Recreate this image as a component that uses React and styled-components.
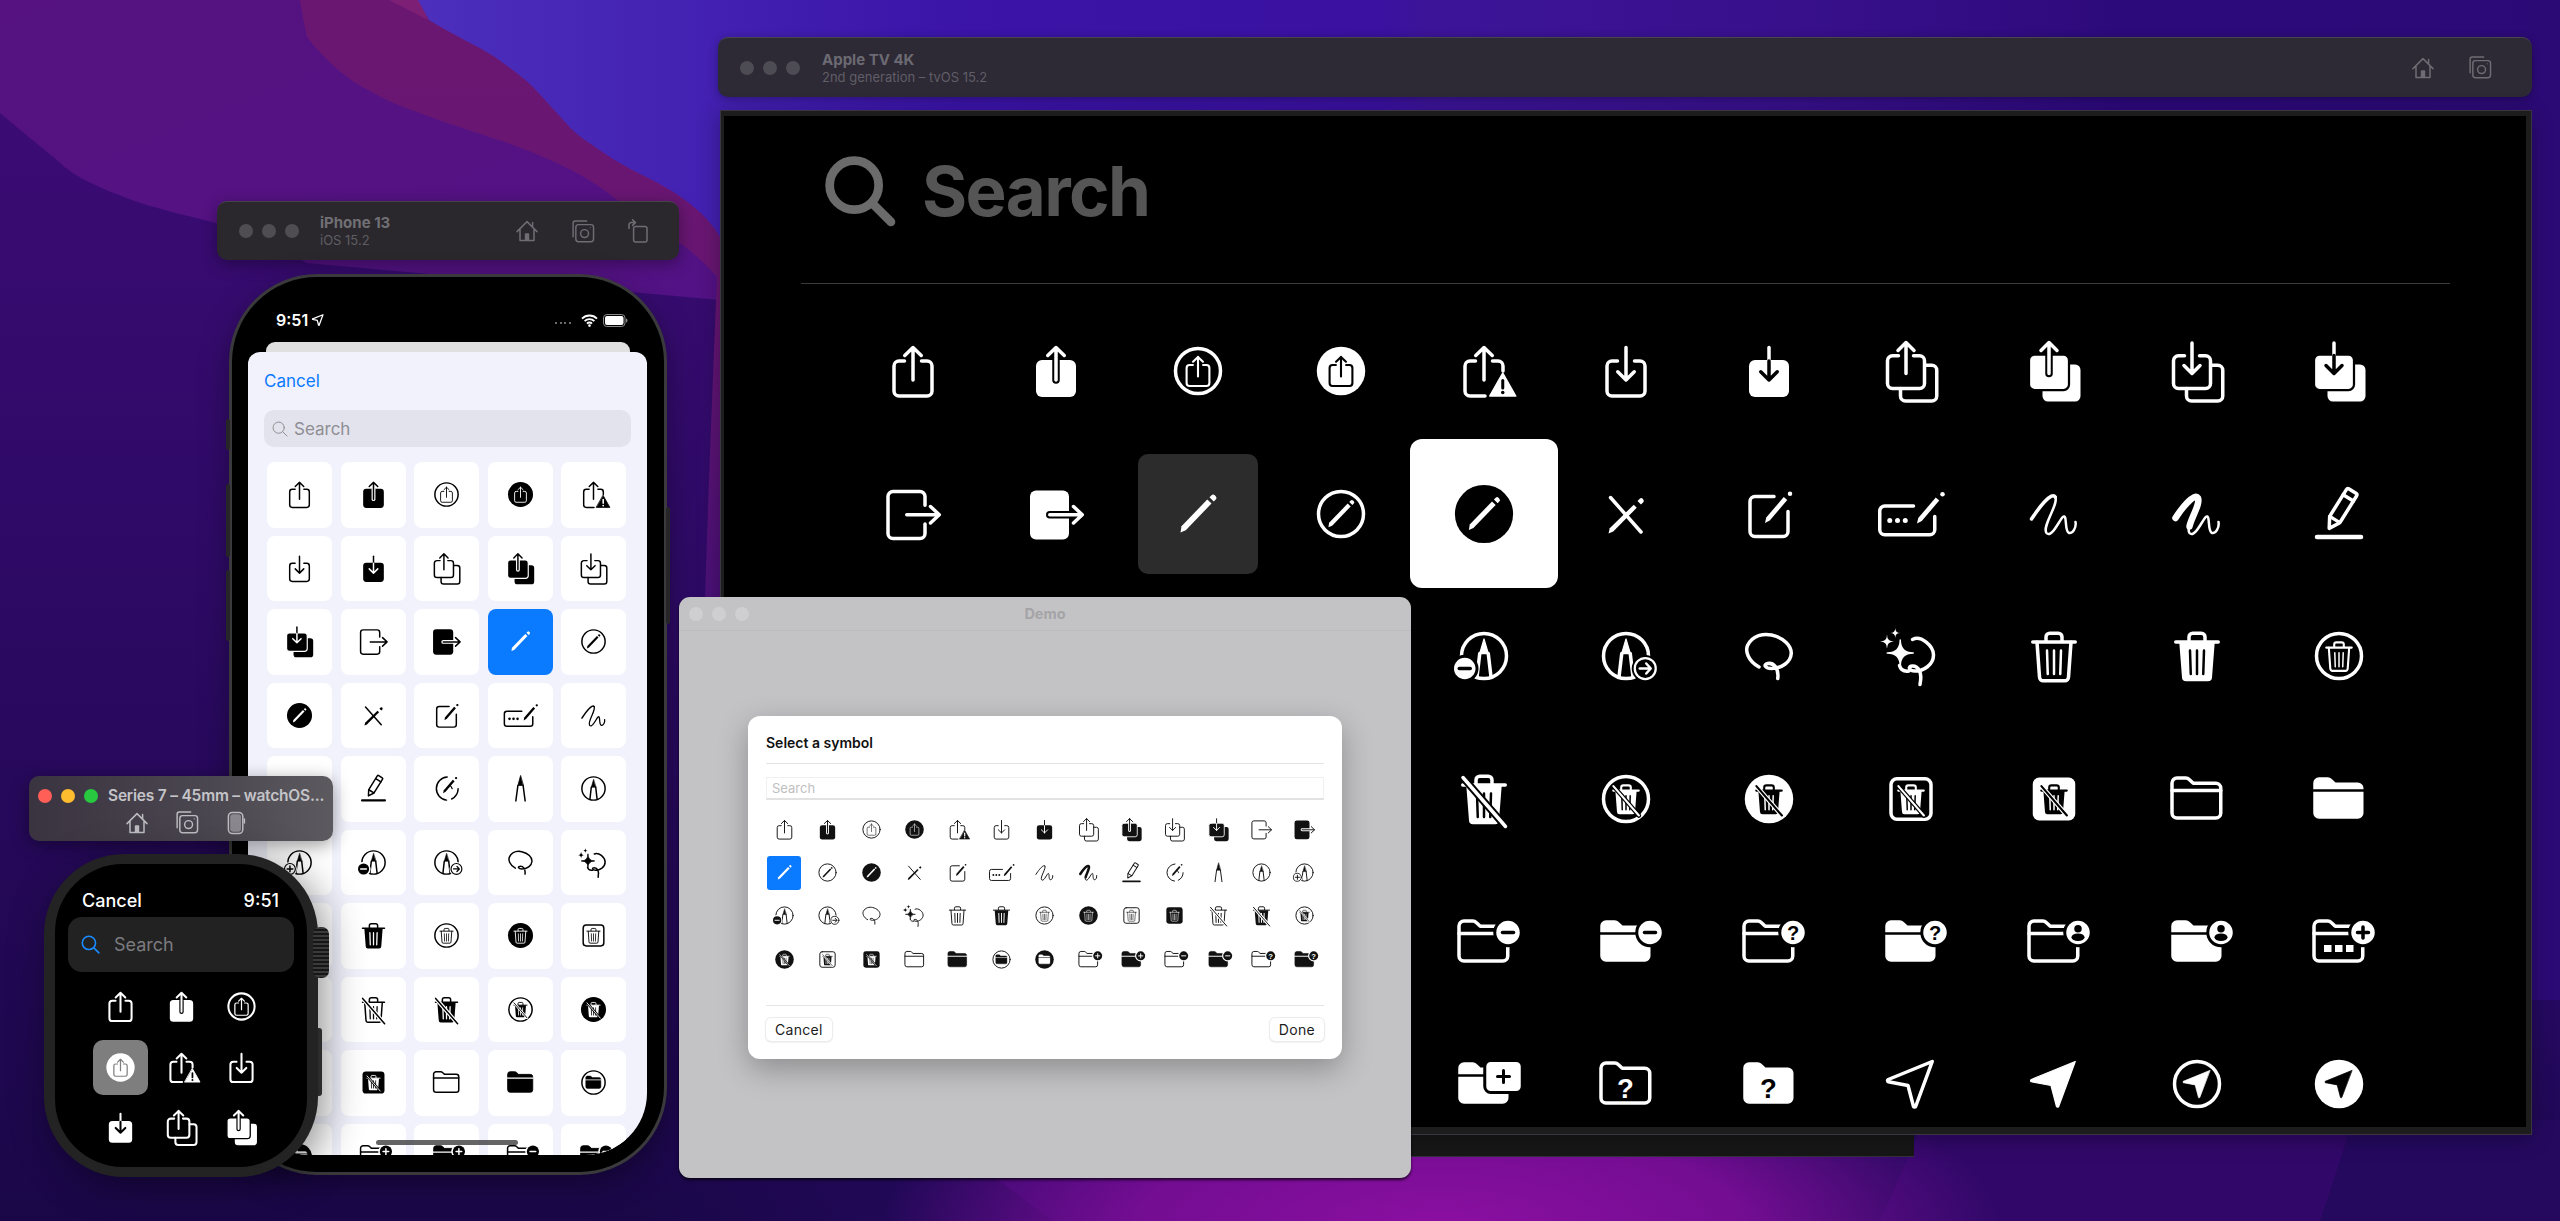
import React from 'react';
import styled, { createGlobalStyle } from 'styled-components';

const GlobalStyle = createGlobalStyle`
  html, body {
    margin: 0;
    padding: 0;
    background: #1b0750;
    font-family: Inter, "Liberation Sans", sans-serif;
    overflow: hidden;
  }
`;

/* ---------- symbols, all drawn in a 24 box, f = ink, b = what lies behind ---------- */

const mini = (node, s = 0.6) => (
  <g transform={`translate(12 12) scale(${s}) translate(-12 -12)`}>{node}</g>
);
const circled = (draw, s) => (f, b) => (
  <>
    <circle cx="12" cy="12" r="9" stroke={f} />
    {mini(draw(f, b), s)}
  </>
);
const circledFill = (draw, s) => (f, b) => (
  <>
    <circle cx="12" cy="12" r="9.7" fill={f} />
    {mini(draw(b, f), s)}
  </>
);
const squared = (draw, s) => (f, b) => (
  <>
    <rect x="4" y="3.9" width="16" height="16.2" rx="2.4" stroke={f} />
    {mini(draw(f, b), s)}
  </>
);
const squaredFill = (draw, s) => (f, b) => (
  <>
    <rect x="3.5" y="3.4" width="17" height="17.2" rx="2.6" fill={f} />
    {mini(draw(b, f), s)}
  </>
);

const tray = 'M8.6 8H6.4a2 2 0 0 0-2 2v10a2 2 0 0 0 2 2h11.2a2 2 0 0 0 2-2V10a2 2 0 0 0-2-2h-2.2';
const arrowUp = 'M12 2.6v13M8.7 5.8 12 2.6l3.3 3.2';
const arrowDown = 'M12 2.6v13M8.7 12.3l3.3 3.3 3.3-3.3';

const up = (f) => (
  <>
    <path d={tray} stroke={f} />
    <path d={arrowUp} stroke={f} />
  </>
);
const upFill = (f, b) => (
  <>
    <rect x="4" y="7.6" width="16" height="14.8" rx="2.4" fill={f} />
    <path d="M12 8v7.6" stroke={b} strokeWidth="3" />
    <path d={arrowUp} stroke={f} />
  </>
);
const down = (f) => (
  <>
    <path d={tray} stroke={f} />
    <path d={arrowDown} stroke={f} />
  </>
);
const downFill = (f, b) => (
  <>
    <rect x="4" y="7.6" width="16" height="14.8" rx="2.4" fill={f} />
    <path d="M12 2.6v5.4" stroke={f} />
    <path d="M12 8v7.6M8.7 12.3l3.3 3.3 3.3-3.3" stroke={b} />
  </>
);
const upTriangle = (f, b) => (
  <>
    <path d="M8.6 8H6.4a2 2 0 0 0-2 2v10a2 2 0 0 0 2 2h6" stroke={f} />
    <path d="M15.4 8h2.2a2 2 0 0 1 2 2v2" stroke={f} />
    <path d={arrowUp} stroke={f} />
    <path d="M19.5 12.8 24.7 22H14.3z" fill={f} stroke={f} strokeWidth=".6" />
    <path d="M19.5 15.8v3" stroke={b} strokeWidth="1.2" />
    <circle cx="19.5" cy="20.6" r=".7" fill={b} />
  </>
);
const frontTray = 'M7 5.9H4.6a2 2 0 0 0-2 2V17a2 2 0 0 0 2 2h10.8a2 2 0 0 0 2-2V7.9a2 2 0 0 0-2-2H13';
const backTray = 'M17.6 9.7h2.7a2 2 0 0 1 2 2V22a2 2 0 0 1-2 2H9.8a2 2 0 0 1-2-2v-3';
const upOn = (f) => (
  <>
    <path d={frontTray} stroke={f} />
    <path d={backTray} stroke={f} />
    <path d="M10 .6V13M6.8 3.8 10 .6l3.2 3.2" stroke={f} />
  </>
);
const upOnFill = (f, b) => (
  <>
    <rect x="7.4" y="9.4" width="15.2" height="14.8" rx="2.2" fill={f} />
    <rect x="2" y="5.4" width="16" height="14.2" rx="2.2" fill={f} stroke={b} strokeWidth=".9" />
    <path d="M10 6v7" stroke={b} strokeWidth="3" />
    <path d="M10 .6V13M6.8 3.8 10 .6l3.2 3.2" stroke={f} />
  </>
);
const downOn = (f) => (
  <>
    <path d={frontTray} stroke={f} />
    <path d={backTray} stroke={f} />
    <path d="M10 .8V13M6.8 9.8l3.2 3.2 3.2-3.2" stroke={f} />
  </>
);
const downOnFill = (f, b) => (
  <>
    <rect x="7.4" y="9.4" width="15.2" height="14.8" rx="2.2" fill={f} />
    <rect x="2" y="5.4" width="16" height="14.2" rx="2.2" fill={f} stroke={b} strokeWidth=".9" />
    <path d="M10 .8v5" stroke={f} />
    <path d="M10 5.8V13M6.8 9.8l3.2 3.2 3.2-3.2" stroke={b} />
  </>
);
const exit = (f) => (
  <>
    <path d="M16.8 8.5V5a2 2 0 0 0-2-2H4a2 2 0 0 0-2 2v14.8a2 2 0 0 0 2 2h10.8a2 2 0 0 0 2-2V16" stroke={f} />
    <path d="M9.5 12.3h12.8M19 9l3.5 3.3-3.5 3.3" stroke={f} />
  </>
);
const exitFill = (f, b) => (
  <>
    <rect x="1.6" y="2.6" width="15.6" height="19.6" rx="2.4" fill={f} />
    <path d="M9.5 12.3h7.7" stroke={b} strokeWidth="3" />
    <path d="M9.5 12.3h12.8M19 9l3.5 3.3-3.5 3.3" stroke={f} />
  </>
);
const penBody = 'M5 19.4l.4-2.5 10.3-10.7 1.7 1.6L7.1 18.5z';
const pencil = (f) => (
  <>
    <path d={penBody} fill={f} />
    <path d="M16.6 5.3l.8-.8a.9.9 0 0 1 1.3 0l.4.4a.9.9 0 0 1 0 1.3l-.8.8z" fill={f} />
  </>
);
const pencilSlash = (f) => (
  <>
    <path d="M5.8 5.4 18 19.2" stroke={f} />
    <path d="M5 19.8l.5-2.1 9.6-9.4 1.2 1.2L6.9 19z" fill={f} />
    <path d="M16.6 6.8l.9-.9a.8.8 0 0 1 1.2 0l.2.3a.8.8 0 0 1 0 1.1l-.9.9z" fill={f} />
  </>
);
const squarePencil = (f) => (
  <>
    <path d="M14 5H6.4a2 2 0 0 0-2 2v12a2 2 0 0 0 2 2h11.2a2 2 0 0 0 2-2V11" stroke={f} />
    <path d="M10.4 15.6l.5-2.2 7-8.2 1.4 1.2-7 8.2z" fill={f} />
    <circle cx="20.4" cy="3.9" r=".9" fill={f} />
  </>
);
const rectPencil = (f) => (
  <>
    <path d="M13 8.8H1.5a2 2 0 0 0-2 2v7.5a2 2 0 0 0 2 2h18a2 2 0 0 0 2-2V13" stroke={f} />
    <circle cx="3.5" cy="14.6" r="1" fill={f} />
    <circle cx="6.6" cy="14.6" r="1" fill={f} />
    <circle cx="9.7" cy="14.6" r="1" fill={f} />
    <path d="M14.4 15.8l.5-2.2 7-8.2 1.4 1.2-7 8.2z" fill={f} />
    <circle cx="24.6" cy="4.1" r=".9" fill={f} />
  </>
);
const scribbleRest = 'M12.5 5.2C14 8 7 17 9 19.6C11 21.8 14 14.8 15.5 13.2C17.5 11.6 16 19 18 19.6C19.5 19.9 21 17.5 20.6 15.2';
const scribble = (f) => (
  <>
    <path d="M3 14C6 9.5 11 2.8 12.5 5.2" stroke={f} />
    <path d={scribbleRest} stroke={f} strokeWidth="1" />
  </>
);
const scribbleVar = (f) => (
  <>
    <path d="M3.4 13.6C6 9.5 11 3.4 12.4 5.6C13.4 8 9.6 13.6 9 17" stroke={f} strokeWidth="2.6" />
    <path d={scribbleRest} stroke={f} strokeWidth="1" />
  </>
);
const pencilOutline = (f) => (
  <>
    <g transform="rotate(32 12.5 10.5)">
      <rect x="10.2" y="1.4" width="4.8" height="13.4" rx=".8" stroke={f} />
      <path d="M10.2 4.6H15" stroke={f} />
      <path d="M10.2 14.8l2.4 4.2 2.4-4.2" stroke={f} />
    </g>
    <path d="M3.2 21.2h17.6" stroke={f} strokeWidth="1.8" />
  </>
);
const compass = (f) => (
  <>
    <path d="M12.5 3.1A9 9 0 0 0 12 21" stroke={f} />
    <path d="M21 12.2a9 9 0 0 1-5 7.9" stroke={f} />
    <path d="M9.4 15.6l.5-2.2 7-8.2 1.4 1.2-7 8.2z" fill={f} />
    <circle cx="19.4" cy="3.9" r=".9" fill={f} />
    <path d="M14.4 9.4a5 5 0 0 1 2 2.8" stroke={f} strokeWidth=".9" />
  </>
);
const tip = (f) => (
  <>
    <path d="M12 2.2 10 9.6h4z" fill={f} stroke={f} strokeWidth=".6" />
    <path d="M10 9.6 8.4 21.6M14 9.6l1.6 12" stroke={f} />
  </>
);
const tipNib = (f) => (
  <>
    <path d="M12 5.2 10.3 11h3.4z" fill={f} stroke={f} strokeWidth=".5" />
    <path d="M10.3 11 9.2 20.4M13.7 11l1.1 9.4" stroke={f} />
  </>
);
const tipCircle = (f) => (
  <>
    <circle cx="12" cy="12" r="9" stroke={f} />
    {tipNib(f)}
  </>
);
const badgeAt = (cx, cy, r, f, b, kind) => (
  <>
    <circle cx={cx} cy={cy} r={r + 1.2} fill={b} />
    <circle cx={cx} cy={cy} r={r} fill={kind === 'arrow' || kind === 'ring' ? b : f} stroke={f} strokeWidth={kind === 'arrow' || kind === 'ring' ? '.9' : '0'} />
    {kind === 'minus' && <path d={`M${cx - 2.2} ${cy}h4.4`} stroke={b} />}
    {kind === 'plus' && <path d={`M${cx - 2.2} ${cy}h4.4M${cx} ${cy - 2.2}v4.4`} stroke={b} />}
    {kind === 'ring' && <path d={`M${cx - 2.2} ${cy}h4.4M${cx} ${cy - 2.2}v4.4`} stroke={f} />}
    {kind === 'arrow' && <path d={`M${cx - 2.2} ${cy}h4.2M${cx + .4} ${cy - 2}l1.8 2-1.8 2`} stroke={f} strokeWidth="1" />}
    {kind === 'question' && (
      <text x={cx} y={cy + 2.9} fontSize="8" fontWeight="700" fontFamily="Liberation Sans" textAnchor="middle" fill={b}>?</text>
    )}
    {kind === 'person' && (
      <>
        <circle cx={cx} cy={cy - 1.5} r="1.5" fill={b} />
        <ellipse cx={cx} cy={cy + 1.9} rx="2.6" ry="1.5" fill={b} />
      </>
    )}
  </>
);
const tipPlus = (f, b) => (
  <>
    {tipCircle(f)}
    {badgeAt(4.6, 17, 4.2, f, b, 'ring')}
  </>
);
const tipMinus = (f, b) => (
  <>
    {tipCircle(f)}
    {badgeAt(4.3, 17, 4.3, f, b, 'minus')}
  </>
);
const tipArrow = (f, b) => (
  <>
    {tipCircle(f)}
    {badgeAt(19.7, 17, 4.2, f, b, 'arrow')}
  </>
);
const lasso = (f) => (
  <path
    d="M8 16.4C3.5 14 2.5 10 3.4 7.8C5.5 3.5 10 3 13 3.6C18 4.7 21 8 20.9 11C20.7 14.5 17 17 13 17C10.5 17 9.5 15.4 11.5 15C14 14.6 16 17 15.5 21"
    stroke={f}
  />
);
const star = (x, y, r) => `M${x} ${y - r}Q${x} ${y} ${x + r} ${y}Q${x} ${y} ${x} ${y + r}Q${x} ${y} ${x - r} ${y}Q${x} ${y} ${x} ${y - r}Z`;
const lassoSpark = (f) => (
  <>
    <path
      d="M12.6 5.4C16 3.6 21 8 21 11.6C21 15.6 17 18 13.6 18C11 18 10.6 16 12.6 16C15 16 16.6 18.6 15.6 23.4"
      stroke={f}
    />
    <path d="M7.4 15.8C8 18 9.8 18.2 11.2 18" stroke={f} />
    <path d={star(7.7, 10.8, 5.2)} fill={f} stroke={f} strokeWidth=".6" />
    <path d={star(5.7, 2.8, 2)} fill={f} />
    <path d={star(2.4, 6.2, 2.8)} fill={f} />
  </>
);
const trashLid = (f) => (
  <>
    <path d="M3.5 6.4h17" stroke={f} />
    <path d="M8.8 6V4.4a1.5 1.5 0 0 1 1.5-1.5h3.4a1.5 1.5 0 0 1 1.5 1.5V6" stroke={f} />
  </>
);
const trashRibs = 'M9.2 9.8l.3 9.4M12 9.8v9.4M14.8 9.8l-.3 9.4';
const trash = (f) => (
  <>
    {trashLid(f)}
    <path d="M5.2 6.5 6.2 20.4a1.5 1.5 0 0 0 1.5 1.5h8.6a1.5 1.5 0 0 0 1.5-1.5L18.8 6.5" stroke={f} />
    <path d={trashRibs} stroke={f} strokeWidth="1" />
  </>
);
const trashFill = (f, b) => (
  <>
    {trashLid(f)}
    <path d="M4.9 6.4 6 20.6a1.6 1.6 0 0 0 1.6 1.5h8.8a1.6 1.6 0 0 0 1.6-1.5L19.1 6.4z" fill={f} />
    <path d={trashRibs} stroke={b} strokeWidth="1" />
  </>
);
const slashOver = (f, b) => (
  <>
    <path d="M3.6 3.4 20.6 23" stroke={b} strokeWidth="3" />
    <path d="M3.6 3.4 20.6 23" stroke={f} />
  </>
);
const trashSlash = (f, b) => (
  <>
    {trash(f, b)}
    {slashOver(f, b)}
  </>
);
const trashSlashFill = (f, b) => (
  <>
    {trashFill(f, b)}
    {slashOver(f, b)}
  </>
);
const folderOutline = 'M2 5.6a2 2 0 0 1 2-2h3.5a2 2 0 0 1 1.4.6l1.6 1.5h9a2 2 0 0 1 2 2v9.9a2 2 0 0 1-2 2H4a2 2 0 0 1-2-2z';
const folder = (f) => (
  <>
    <path d={folderOutline} stroke={f} />
    <path d="M2 8.6h19.5" stroke={f} />
  </>
);
const folderFill = (f, b) => (
  <>
    <path d={folderOutline} fill={f} stroke={f} strokeWidth=".6" />
    <path d="M1.6 8.6h20.3" stroke={b} strokeWidth="1" />
  </>
);
const folderBadge = (kind, filled) => (f, b) => (
  <>
    {filled ? folderFill(f, b) : folder(f, b)}
    {badgeAt(21.6, 8.2, 4.7, f, b, kind)}
  </>
);
const folderDots = (f, b) => (
  <>
    {folder(f, b)}
    <path d="M6 13.2h3v2.8H6zM10.4 13.2h3v2.8h-3zM14.8 13.2h3v2.8h-3z" fill={f} />
    {badgeAt(21.6, 8.2, 4.7, f, b, 'plus')}
  </>
);
const folderRect = (f, b) => (
  <>
    {folderFill(f, b)}
    <rect x="12.3" y="2.6" width="15" height="12.8" rx="2.4" fill={f} stroke={b} strokeWidth="1.2" />
    <path d="M17.4 9h4.8M19.8 6.6v4.8" stroke={b} strokeWidth="1.2" />
  </>
);
const qMark = (color) => (
  <text x="11.8" y="17.6" fontSize="11" fontWeight="700" fontFamily="Liberation Sans" textAnchor="middle" fill={color}>?</text>
);
const folderQuestion = (f) => (
  <>
    <path d={folderOutline} stroke={f} />
    {qMark(f)}
  </>
);
const folderQuestionFill = (f, b) => (
  <>
    <path d={folderOutline} fill={f} stroke={f} strokeWidth=".6" />
    {qMark(b)}
  </>
);
const planeShape = 'M20.5 3 2.9 10.2a.5.5 0 0 0 0 .9L10.8 12.6 13 21a.5.5 0 0 0 .9-.1z';
const plane = (f) => <path d={planeShape} stroke={f} />;
const planeFill = (f) => <path d={planeShape} fill={f} stroke={f} strokeWidth=".5" />;

const SYMBOLS = [
  up, upFill, circled(up), circledFill(up), upTriangle, down, downFill, upOn, upOnFill, downOn, downOnFill,
  exit, exitFill, pencil, circled(pencil, 0.72), circledFill(pencil, 0.72), pencilSlash, squarePencil, rectPencil, scribble, scribbleVar, pencilOutline,
  compass, tip, tipCircle, tipPlus, tipMinus, tipArrow, lasso, lassoSpark, trash, trashFill, circled(trash),
  circledFill(trash), squared(trash), squaredFill(trash), trashSlash, trashSlashFill, circled(trashSlashFill), circledFill(trashSlashFill), squared(trashSlashFill), squaredFill(trashSlashFill), folder, folderFill,
  circled(folderFill), circledFill(folderFill), folderBadge('plus', false), folderBadge('plus', true), folderBadge('minus', false), folderBadge('minus', true), folderBadge('question', false), folderBadge('question', true), folderBadge('person', false), folderBadge('person', true), folderDots,
  folderDots, folderDots, folderRect, folderRect, folderRect, folderQuestion, folderQuestionFill, plane, planeFill, circled(planeFill), circledFill(planeFill),
];

const Glyph = styled.svg`
  display: block;
  flex: none;
  width: ${(p) => p.$size}px;
  height: ${(p) => p.$size}px;
  overflow: visible;
  fill: none;
  stroke-width: ${(p) => p.$weight};
  stroke-linecap: round;
  stroke-linejoin: round;
`;

const SymbolIcon = ({ index, size, weight }) => (
  <Glyph viewBox="0 0 24 24" $size={size} $weight={weight}>
    {SYMBOLS[index]('currentColor', 'var(--cut)')}
  </Glyph>
);

const SearchGlyph = ({ size, weight, color }) => (
  <Glyph viewBox="0 0 24 24" $size={size} $weight={weight}>
    <circle cx="10" cy="10" r="8.4" stroke={color} />
    <path d="M16.2 16.2 22.6 22.6" stroke={color} />
  </Glyph>
);

const ToolGlyph = styled(Glyph)`
  color: ${(p) => p.$tone || '#6f6d73'};
`;

const HomeTool = ({ tone }) => (
  <ToolGlyph viewBox="0 0 24 24" $size={24} $weight={1.5} $tone={tone}>
    <path d="M2 12.6 12 2.6l10 10M5 10v11.4h14V10M17.6 7.6V3.4" stroke="currentColor" />
    <path d="M9.8 21.4v-6.2a1 1 0 0 1 1-1h2.4a1 1 0 0 1 1 1v6.2z" fill="currentColor" />
  </ToolGlyph>
);
const CameraTool = ({ tone }) => (
  <ToolGlyph viewBox="0 0 24 24" $size={25} $weight={1.4} $tone={tone}>
    <path d="M3 17V4a2 2 0 0 1 2-2h11" stroke="currentColor" />
    <rect x="5.6" y="5.4" width="17" height="16.4" rx="2.6" stroke="currentColor" />
    <circle cx="14" cy="14" r="3.8" stroke="currentColor" />
    <circle cx="19.4" cy="8.4" r=".6" fill="currentColor" />
  </ToolGlyph>
);
const RotateTool = ({ tone }) => (
  <ToolGlyph viewBox="0 0 24 24" $size={24} $weight={1.5} $tone={tone}>
    <rect x="7.6" y="7.6" width="13.4" height="15.4" rx="2" stroke="currentColor" />
    <path d="M3 9.4V5.6a2 2 0 0 1 2-2h4M6.6.8 9.4 3.6 6.6 6.4" stroke="currentColor" />
  </ToolGlyph>
);
const WatchTool = ({ tone }) => (
  <ToolGlyph viewBox="0 0 24 24" $size={24} $weight={1.5} $tone={tone}>
    <rect x="4.4" y="1.4" width="14.4" height="21.2" rx="4" stroke="currentColor" />
    <rect x="6.2" y="3.2" width="10.8" height="17.6" rx="2.8" fill="currentColor" opacity=".55" />
    <path d="M20.4 8v4" stroke="currentColor" />
  </ToolGlyph>
);

/* ---------- desktop ---------- */

const Desktop = styled.div`
  position: relative;
  width: 2560px;
  height: 1221px;
  overflow: hidden;
`;

const WallpaperArt = styled.svg`
  position: absolute;
  inset: 0;
  display: block;
`;

const Wallpaper = () => (
  <WallpaperArt width="2560" height="1221" viewBox="0 0 2560 1221">
    <defs>
      <linearGradient id="low" x1="0" y1="0" x2="0" y2="1">
        <stop offset="0" stopColor="#3f0c78" />
        <stop offset=".45" stopColor="#2e0a66" />
        <stop offset="1" stopColor="#1a0748" />
      </linearGradient>
      <linearGradient id="mid" x1="0" y1="0" x2="1" y2="1">
        <stop offset="0" stopColor="#551280" />
        <stop offset="1" stopColor="#531285" />
      </linearGradient>
      <linearGradient id="red" x1="0" y1="0" x2="0" y2="600" gradientUnits="userSpaceOnUse">
        <stop offset="0" stopColor="#6a1772" />
        <stop offset=".5" stopColor="#681672" />
        <stop offset="1" stopColor="#4a1078" />
      </linearGradient>
      <linearGradient id="blue" x1="420" y1="0" x2="2560" y2="0" gradientUnits="userSpaceOnUse">
        <stop offset="0" stopColor="#4c2fbc" />
        <stop offset=".25" stopColor="#3b14a8" />
        <stop offset=".45" stopColor="#3a11a0" />
        <stop offset=".47" stopColor="#3c1498" />
        <stop offset=".64" stopColor="#38108c" />
        <stop offset=".79" stopColor="#2d0a7c" />
        <stop offset="1" stopColor="#2c0a76" />
      </linearGradient>
      <linearGradient id="rightLow" x1="0" y1="0" x2="0" y2="1">
        <stop offset="0" stopColor="#250960" />
        <stop offset="1" stopColor="#1e0750" />
      </linearGradient>
      <linearGradient id="floor" x1="640" y1="0" x2="1050" y2="0" gradientUnits="userSpaceOnUse">
        <stop offset="0" stopColor="#25095f" stopOpacity="0" />
        <stop offset="1" stopColor="#25095f" />
      </linearGradient>
      <radialGradient id="glow" cx="1440" cy="1235" r="560" gradientUnits="userSpaceOnUse" gradientTransform="translate(0 800) scale(1 .35)">
        <stop offset="0" stopColor="#8c0fa2" />
        <stop offset=".55" stopColor="#730d92" />
        <stop offset="1" stopColor="#730d92" stopOpacity="0" />
      </radialGradient>
    </defs>
    <rect width="2560" height="1221" fill="url(#low)" />
    <path
      d="M0 0H720V300L307 263C280 250 250 232 212 222C180 214 155 208 132 200C100 188 75 178 57 160C35 142 18 128 0 113Z"
      fill="url(#mid)"
    />
    <path
      d="M300 0C302 12 304 25 307 37C325 60 345 78 368 90C385 100 405 108 425 115C465 130 505 140 543 157C570 168 595 182 613 197C650 222 690 245 717 277C712 400 708 500 705 600L760 600L740 0Z"
      fill="url(#red)"
    />
    <path d="M389 0H420L428 20Z" fill="#7d1f74" />
    <path
      d="M418 0L429 20C455 36 478 46 495 57C510 68 522 76 533 87C548 103 556 112 566 123C578 137 590 143 604 153C628 170 652 178 675 193C695 206 710 220 720 237V1000H2560V0Z"
      fill="url(#blue)"
    />
    <rect y="1000" x="2490" width="70" height="221" fill="url(#rightLow)" />
    <rect y="1120" x="640" width="1920" height="101" fill="url(#floor)" />
    <path d="M995 1178 1053 1221H1322L1290 1178Z" fill="#4a0c80" opacity=".45" />
    <path d="M1920 1130 1880 1221H2320L2350 1130Z" fill="#34096c" opacity=".8" />
    <rect y="1120" x="640" width="1920" height="101" fill="url(#glow)" />
  </WallpaperArt>
);

/* ---------- shared window chrome ---------- */

const Dot = styled.span`
  flex: none;
  width: 14px;
  height: 14px;
  border-radius: 50%;
  background: ${(p) => p.$color};
`;

const Dots = styled.div`
  display: flex;
  gap: 9px;
`;

const TitleBlock = styled.div`
  display: flex;
  flex-direction: column;
  gap: 1px;
`;

const BarTitle = styled.div`
  font-size: 15px;
  line-height: 18px;
  font-weight: 700;
  color: ${(p) => p.$color};
`;

const BarSub = styled.div`
  font-size: 13px;
  line-height: 15px;
  color: ${(p) => p.$color};
`;

const ToolRow = styled.div`
  display: flex;
  align-items: center;
  margin-left: auto;
  gap: ${(p) => p.$gap}px;
`;

/* ---------- Apple TV ---------- */

const TvBar = styled.header`
  position: absolute;
  left: 718px;
  top: 37px;
  width: 1814px;
  height: 60px;
  box-sizing: border-box;
  display: flex;
  align-items: center;
  gap: 22px;
  padding: 0 40px 0 22px;
  background: #2d2935;
  border-top: 1px solid #4a4651;
  border-radius: 10px;
  box-shadow: 0 2px 10px rgba(0, 0, 0, 0.3);
`;

const TvStand = styled.div`
  position: absolute;
  left: 1000px;
  top: 1130px;
  width: 914px;
  height: 26px;
  background: #171717;
  border-bottom: 1px solid #34303b;
`;

const TvFrame = styled.section`
  position: absolute;
  left: 720px;
  top: 110px;
  width: 1812px;
  height: 1025px;
  box-sizing: border-box;
  padding: 5px 5px 7px 3px;
  background: #1d1d1d;
  border: 1px solid #3a3540;
  box-shadow: 0 4px 20px rgba(0, 0, 0, 0.3);
`;

const TvScreen = styled.div`
  --cut: #000;
  height: 100%;
  display: flex;
  flex-direction: column;
  background: #000;
  overflow: hidden;
  color: #fff;
`;

const TvHead = styled.div`
  flex: none;
  height: 168px;
  box-sizing: border-box;
  margin: 0 76px 0 77px;
  padding: 40px 0 0 24px;
  border-bottom: 1px solid #3a3a3a;
`;

const TvSearchRow = styled.div`
  display: flex;
  align-items: center;
  gap: 27px;
`;

const TvSearchLabel = styled.span`
  font-size: 69px;
  line-height: 70px;
  font-weight: 700;
  letter-spacing: -1.6px;
  color: #555;
`;

const TvGrid = styled.div`
  display: grid;
  grid-template-columns: repeat(11, 142.6px);
  grid-auto-rows: 142.6px;
  margin: 16px 0 0 118px;
`;

const TvCell = styled.div`
  display: flex;
  align-items: center;
  justify-content: center;
`;

const TvTile = styled.div`
  flex: none;
  display: flex;
  align-items: center;
  justify-content: center;
  width: ${(p) => (p.$focus ? 148 : 120)}px;
  height: ${(p) => (p.$focus ? 149 : 120)}px;
  border-radius: ${(p) => (p.$focus ? 12 : 10)}px;
  color: ${(p) => (p.$focus ? '#000' : '#fff')};
  background: ${(p) => (p.$focus ? '#fff' : '#2c2c2c')};
  --cut: ${(p) => (p.$focus ? '#fff' : '#2c2c2c')};
`;

const AppleTv = () => (
  <>
    <TvStand />
    <TvBar>
      <Dots>
        <Dot $color="#4d4b53" />
        <Dot $color="#4d4b53" />
        <Dot $color="#4d4b53" />
      </Dots>
      <TitleBlock>
        <BarTitle $color="#6c6a72">Apple TV 4K</BarTitle>
        <BarSub $color="#605e66">2nd generation – tvOS 15.2</BarSub>
      </TitleBlock>
      <ToolRow $gap={32}>
        <HomeTool />
        <CameraTool />
      </ToolRow>
    </TvBar>
    <TvFrame>
      <TvScreen>
        <TvHead>
          <TvSearchRow>
            <SearchGlyph size={70} weight={3} color="#6b6b6b" />
            <TvSearchLabel>Search</TvSearchLabel>
          </TvSearchRow>
        </TvHead>
        <TvGrid>
          {SYMBOLS.map((_, i) => (
            <TvCell key={i}>
              {i === 13 ? (
                <TvTile>
                  <SymbolIcon index={i} size={60} weight={1.4} />
                </TvTile>
              ) : i === 15 ? (
                <TvTile $focus>
                  <SymbolIcon index={i} size={72} weight={1.4} />
                </TvTile>
              ) : (
                <SymbolIcon index={i} size={60} weight={1.4} />
              )}
            </TvCell>
          ))}
        </TvGrid>
      </TvScreen>
    </TvFrame>
  </>
);

/* ---------- iPhone ---------- */

const PhoneBar = styled.header`
  position: absolute;
  left: 217px;
  top: 201px;
  width: 462px;
  height: 59px;
  box-sizing: border-box;
  display: flex;
  align-items: center;
  gap: 21px;
  padding: 0 29px 0 22px;
  background: #2a282d;
  border-top: 1px solid #45424a;
  border-radius: 10px;
  box-shadow: 0 4px 16px rgba(0, 0, 0, 0.35);
`;

const PhoneBody = styled.section`
  position: absolute;
  left: 229px;
  top: 274px;
  width: 438px;
  height: 901px;
  box-sizing: border-box;
  display: flex;
  flex-direction: column;
  border: 3px solid #3a3a3c;
  border-radius: 88px;
  background: #000;
  box-shadow: 0 10px 30px rgba(0, 0, 0, 0.35);
`;

const SideKey = styled.span`
  position: absolute;
  top: ${(p) => p.$top}px;
  height: ${(p) => p.$height}px;
  width: 4px;
  ${(p) => (p.$right ? 'right: -6px;' : 'left: -6px;')}
  background: #262528;
  border-radius: 2px;
`;

const StatusRow = styled.div`
  flex: none;
  height: 65px;
  box-sizing: border-box;
  display: flex;
  align-items: center;
  padding: 21px 36px 0 44px;
  color: #fff;
  --cut: #000;
`;

const StatusTime = styled.span`
  font-size: 16px;
  font-weight: 600;
  margin-right: 3px;
`;

const StatusRight = styled.div`
  margin-left: auto;
  display: flex;
  align-items: center;
  gap: 5px;
`;

const SignalDots = styled.span`
  width: 18px;
  height: 2px;
  margin: 6px 3px 0 0;
  background: repeating-linear-gradient(90deg, #6a6a6a 0 2px, transparent 2px 4.6px);
`;

const BackCard = styled.div`
  flex: none;
  height: 10px;
  margin: 0 34px;
  background: #e0e0e0;
  border-radius: 9px 9px 0 0;
`;

const Sheet = styled.div`
  --cut: #fff;
  flex: 1;
  min-height: 0;
  position: relative;
  margin: 0 17px 17px 16px;
  padding: 0 16px;
  background: #f2f2fd;
  border-radius: 12px 12px 62px 62px;
  overflow: hidden;
`;

const SheetCancel = styled.div`
  padding-top: 19px;
  height: 38px;
  font-size: 17px;
  line-height: 21px;
  color: #0a7aff;
`;

const SheetSearch = styled.div`
  margin-top: 1px;
  height: 37px;
  display: flex;
  align-items: center;
  gap: 6px;
  padding-left: 8px;
  background: #e3e3ed;
  border-radius: 10px;
  font-size: 17px;
  color: #8e8e93;
`;

const SheetGrid = styled.div`
  display: grid;
  grid-template-columns: repeat(5, 65px);
  grid-auto-rows: 65.5px;
  column-gap: 8.5px;
  row-gap: 8px;
  margin: 15px 0 0 3px;
`;

const SheetTile = styled.div`
  display: flex;
  align-items: center;
  justify-content: center;
  border-radius: 8px;
  background: ${(p) => (p.$active ? '#0a7aff' : '#fff')};
  color: ${(p) => (p.$active ? '#fff' : '#000')};
  --cut: ${(p) => (p.$active ? '#0a7aff' : '#fff')};
`;

const HomeIndicator = styled.span`
  position: absolute;
  left: 128px;
  bottom: 10px;
  width: 142px;
  height: 5px;
  border-radius: 3px;
  background: rgba(50, 50, 50, 0.75);
`;

const IPhone = () => (
  <>
    <PhoneBar>
      <Dots>
        <Dot $color="#4f4d51" />
        <Dot $color="#4f4d51" />
        <Dot $color="#4f4d51" />
      </Dots>
      <TitleBlock>
        <BarTitle $color="#716f74">iPhone 13</BarTitle>
        <BarSub $color="#5f5d62">iOS 15.2</BarSub>
      </TitleBlock>
      <ToolRow $gap={31}>
        <HomeTool />
        <CameraTool />
        <RotateTool />
      </ToolRow>
    </PhoneBar>
    <PhoneBody>
      <SideKey $top={142} $height={31} />
      <SideKey $top={207} $height={73} />
      <SideKey $top={293} $height={71} />
      <SideKey $right $top={230} $height={117} />
      <StatusRow>
        <StatusTime>9:51</StatusTime>
        <SymbolIcon index={62} size={14} weight={2.2} />
        <StatusRight>
          <SignalDots />
          <svg width="17" height="13" viewBox="0 0 17 13">
            <path d="M1 4.6a10.6 10.6 0 0 1 15 0M3.6 7.2a7 7 0 0 1 9.8 0M6 9.6a3.4 3.4 0 0 1 5 0" fill="none" stroke="#fff" strokeWidth="1.8" />
            <circle cx="8.5" cy="11.6" r="1.3" fill="#fff" />
          </svg>
          <svg width="25" height="13" viewBox="0 0 25 13">
            <rect x=".5" y=".5" width="21.5" height="12" rx="3.4" fill="none" stroke="#8a8a8a" />
            <rect x="2" y="2" width="18.5" height="9" rx="2" fill="#fff" />
            <path d="M23 4.4c1 .4 1.5 1.1 1.5 2.1s-.5 1.7-1.5 2.1z" fill="#8a8a8a" />
          </svg>
        </StatusRight>
      </StatusRow>
      <BackCard />
      <Sheet>
        <SheetCancel>Cancel</SheetCancel>
        <SheetSearch>
          <SearchGlyph size={16} weight={1.5} color="#8e8e93" />
          Search
        </SheetSearch>
        <SheetGrid>
          {SYMBOLS.slice(0, 50).map((_, i) => (
            <SheetTile key={i} $active={i === 13}>
              <SymbolIcon index={i} size={31} weight={1.15} />
            </SheetTile>
          ))}
        </SheetGrid>
        <HomeIndicator />
      </Sheet>
    </PhoneBody>
  </>
);

/* ---------- Demo window with the mac sheet ---------- */

const DemoWindow = styled.section`
  position: absolute;
  left: 679px;
  top: 597px;
  width: 732px;
  height: 581px;
  display: flex;
  flex-direction: column;
  background: #c3c3c5;
  border-radius: 11px;
  box-shadow: 0 2px 3px rgba(0, 0, 0, 0.7);
`;

const DemoTitleBar = styled.div`
  position: relative;
  flex: none;
  height: 33px;
  display: flex;
  align-items: center;
  justify-content: center;
  border-bottom: 1px solid #bbbbbd;
  font-size: 14.5px;
  font-weight: 700;
  color: #a4a4a7;
`;

const DemoDots = styled(Dots)`
  position: absolute;
  left: 10px;
  top: 10px;
`;

const DemoBody = styled.div`
  flex: 1;
  display: flex;
  justify-content: center;
  align-items: flex-start;
  padding-top: 85px;
`;

const Dialog = styled.div`
  --cut: #fff;
  width: 594px;
  height: 343px;
  box-sizing: border-box;
  display: flex;
  flex-direction: column;
  padding: 0 18px;
  background: #fff;
  border-radius: 12px;
  box-shadow: 0 10px 30px rgba(0, 0, 0, 0.28);
  color: #111;
`;

const DialogTitle = styled.div`
  flex: none;
  height: 48px;
  box-sizing: border-box;
  padding-top: 6px;
  display: flex;
  align-items: center;
  border-bottom: 1px solid #e4e4e4;
  font-size: 14px;
  font-weight: 600;
`;

const DialogSearch = styled.div`
  flex: none;
  height: 23px;
  box-sizing: border-box;
  margin-top: 13px;
  padding-left: 5px;
  display: flex;
  align-items: center;
  border: 1px solid #f0f0f0;
  border-bottom: 2px solid #e2e2e2;
  font-size: 13px;
  color: #c0c0c0;
`;

const DialogGrid = styled.div`
  flex: none;
  display: grid;
  grid-template-columns: repeat(13, 43.4px);
  grid-auto-rows: 43.2px;
  margin: 8px 0 0 -3.4px;
`;

const DialogCell = styled.div`
  display: flex;
  align-items: center;
  justify-content: center;
`;

const DialogTile = styled.div`
  width: 34px;
  height: 34px;
  display: flex;
  align-items: center;
  justify-content: center;
  flex: none;
  background: #0a7aff;
  color: #fff;
  --cut: #0a7aff;
  border-radius: 3px;
`;

const DialogFooter = styled.div`
  flex: none;
  margin-top: 24px;
  padding-top: 12px;
  display: flex;
  justify-content: space-between;
  border-top: 1px solid #e4e4e4;
`;

const MacButton = styled.div`
  height: 23px;
  box-sizing: border-box;
  padding: 0 9px;
  display: flex;
  align-items: center;
  background: #fff;
  border-radius: 5px;
  box-shadow: 0 0 0 1px #ececec, 0 1px 2px rgba(0, 0, 0, 0.18);
  font-size: 14px;
  letter-spacing: 0.3px;
  color: #1c1c1c;
`;

const DemoApp = () => (
  <DemoWindow>
    <DemoTitleBar>
      <DemoDots>
        <Dot $color="#cfcfd1" />
        <Dot $color="#cfcfd1" />
        <Dot $color="#cfcfd1" />
      </DemoDots>
      Demo
    </DemoTitleBar>
    <DemoBody>
      <Dialog>
        <DialogTitle>Select a symbol</DialogTitle>
        <DialogSearch>Search</DialogSearch>
        <DialogGrid>
          {SYMBOLS.slice(0, 52).map((_, i) => (
            <DialogCell key={i}>
              {i === 13 ? (
                <DialogTile>
                  <SymbolIcon index={i} size={23} weight={1} />
                </DialogTile>
              ) : (
                <SymbolIcon index={i} size={23} weight={1} />
              )}
            </DialogCell>
          ))}
        </DialogGrid>
        <DialogFooter>
          <MacButton>Cancel</MacButton>
          <MacButton>Done</MacButton>
        </DialogFooter>
      </Dialog>
    </DemoBody>
  </DemoWindow>
);

/* ---------- Apple Watch ---------- */

const WatchBar = styled.header`
  position: absolute;
  left: 29px;
  top: 776px;
  width: 304px;
  height: 65px;
  box-sizing: border-box;
  display: flex;
  flex-direction: column;
  padding: 10px 9px 0 9px;
  background: linear-gradient(90deg, #3a3340 0%, #4b4750 60%, #5c5a5f 100%);
  border-radius: 10px;
  box-shadow: 0 4px 18px rgba(0, 0, 0, 0.4);
`;

const WatchBarTop = styled.div`
  display: flex;
  align-items: center;
  gap: 10px;
`;

const WatchBarTitle = styled.span`
  font-size: 15.5px;
  font-weight: 600;
  letter-spacing: -0.2px;
  white-space: nowrap;
  color: #c4c4c8;
`;

const WatchBarTools = styled.div`
  display: flex;
  align-items: center;
  gap: 25px;
  margin-top: 5px;
  padding-left: 87px;
`;

const WatchBody = styled.section`
  position: absolute;
  left: 44px;
  top: 854px;
  width: 274px;
  height: 323px;
  box-sizing: border-box;
  padding: 10px 11px;
  background: #232323;
  border-radius: 80px;
  box-shadow: 6px 8px 40px rgba(0, 0, 0, 0.45);
`;

const Crown = styled.span`
  position: absolute;
  left: 269px;
  top: 73px;
  width: 16px;
  height: 51px;
  border-radius: 7px;
  background: repeating-linear-gradient(180deg, #3a3a3a 0 2px, #161616 2px 4px);
`;

const SideButton = styled.span`
  position: absolute;
  left: 274px;
  top: 174px;
  width: 4px;
  height: 68px;
  border-radius: 0 3px 3px 0;
  background: #2c2c2c;
`;

const WatchScreen = styled.div`
  --cut: #000;
  height: 100%;
  box-sizing: border-box;
  padding-top: 24px;
  background: #000;
  border-radius: 68px;
  color: #fff;
`;

const WatchHead = styled.div`
  display: flex;
  justify-content: space-between;
  padding: 0 28px 0 27px;
  height: 24px;
  align-items: center;
  font-size: 18px;
  font-weight: 500;
`;

const WatchSearch = styled.div`
  margin: 5px 13px 0;
  height: 55px;
  display: flex;
  align-items: center;
  gap: 14px;
  padding-left: 13px;
  background: #222;
  border-radius: 14px;
  font-size: 18px;
  color: #7b7b7f;
`;

const WatchGrid = styled.div`
  display: grid;
  grid-template-columns: repeat(3, 60.7px);
  grid-auto-rows: 60.7px;
  margin: 4px 0 0 35px;
`;

const WatchCell = styled.div`
  display: flex;
  align-items: center;
  justify-content: center;
`;

const WatchTile = styled.div`
  flex: none;
  width: 55px;
  height: 55px;
  display: flex;
  align-items: center;
  justify-content: center;
  border-radius: 10px;
  background: #7e7e7e;
  --cut: #7e7e7e;
`;

const AppleWatch = () => (
  <>
    <WatchBar>
      <WatchBarTop>
        <Dots>
          <Dot $color="#ff5f57" />
          <Dot $color="#febc2e" />
          <Dot $color="#28c840" />
        </Dots>
        <WatchBarTitle>Series 7 – 45mm – watchOS...</WatchBarTitle>
      </WatchBarTop>
      <WatchBarTools>
        <HomeTool tone="#bdbdc1" />
        <CameraTool tone="#bdbdc1" />
        <WatchTool tone="#bdbdc1" />
      </WatchBarTools>
    </WatchBar>
    <WatchBody>
      <Crown />
      <SideButton />
      <WatchScreen>
        <WatchHead>
          <span>Cancel</span>
          <span>9:51</span>
        </WatchHead>
        <WatchSearch>
          <SearchGlyph size={19} weight={2} color="#1a8cff" />
          Search
        </WatchSearch>
        <WatchGrid>
          {SYMBOLS.slice(0, 9).map((_, i) => (
            <WatchCell key={i}>
              {i === 3 ? (
                <WatchTile>
                  <SymbolIcon index={i} size={35} weight={1.4} />
                </WatchTile>
              ) : (
                <SymbolIcon index={i} size={35} weight={1.4} />
              )}
            </WatchCell>
          ))}
        </WatchGrid>
      </WatchScreen>
    </WatchBody>
  </>
);

const App = () => (
  <Desktop>
    <GlobalStyle />
    <Wallpaper />
    <AppleTv />
    <IPhone />
    <DemoApp />
    <AppleWatch />
  </Desktop>
);

export default App;
